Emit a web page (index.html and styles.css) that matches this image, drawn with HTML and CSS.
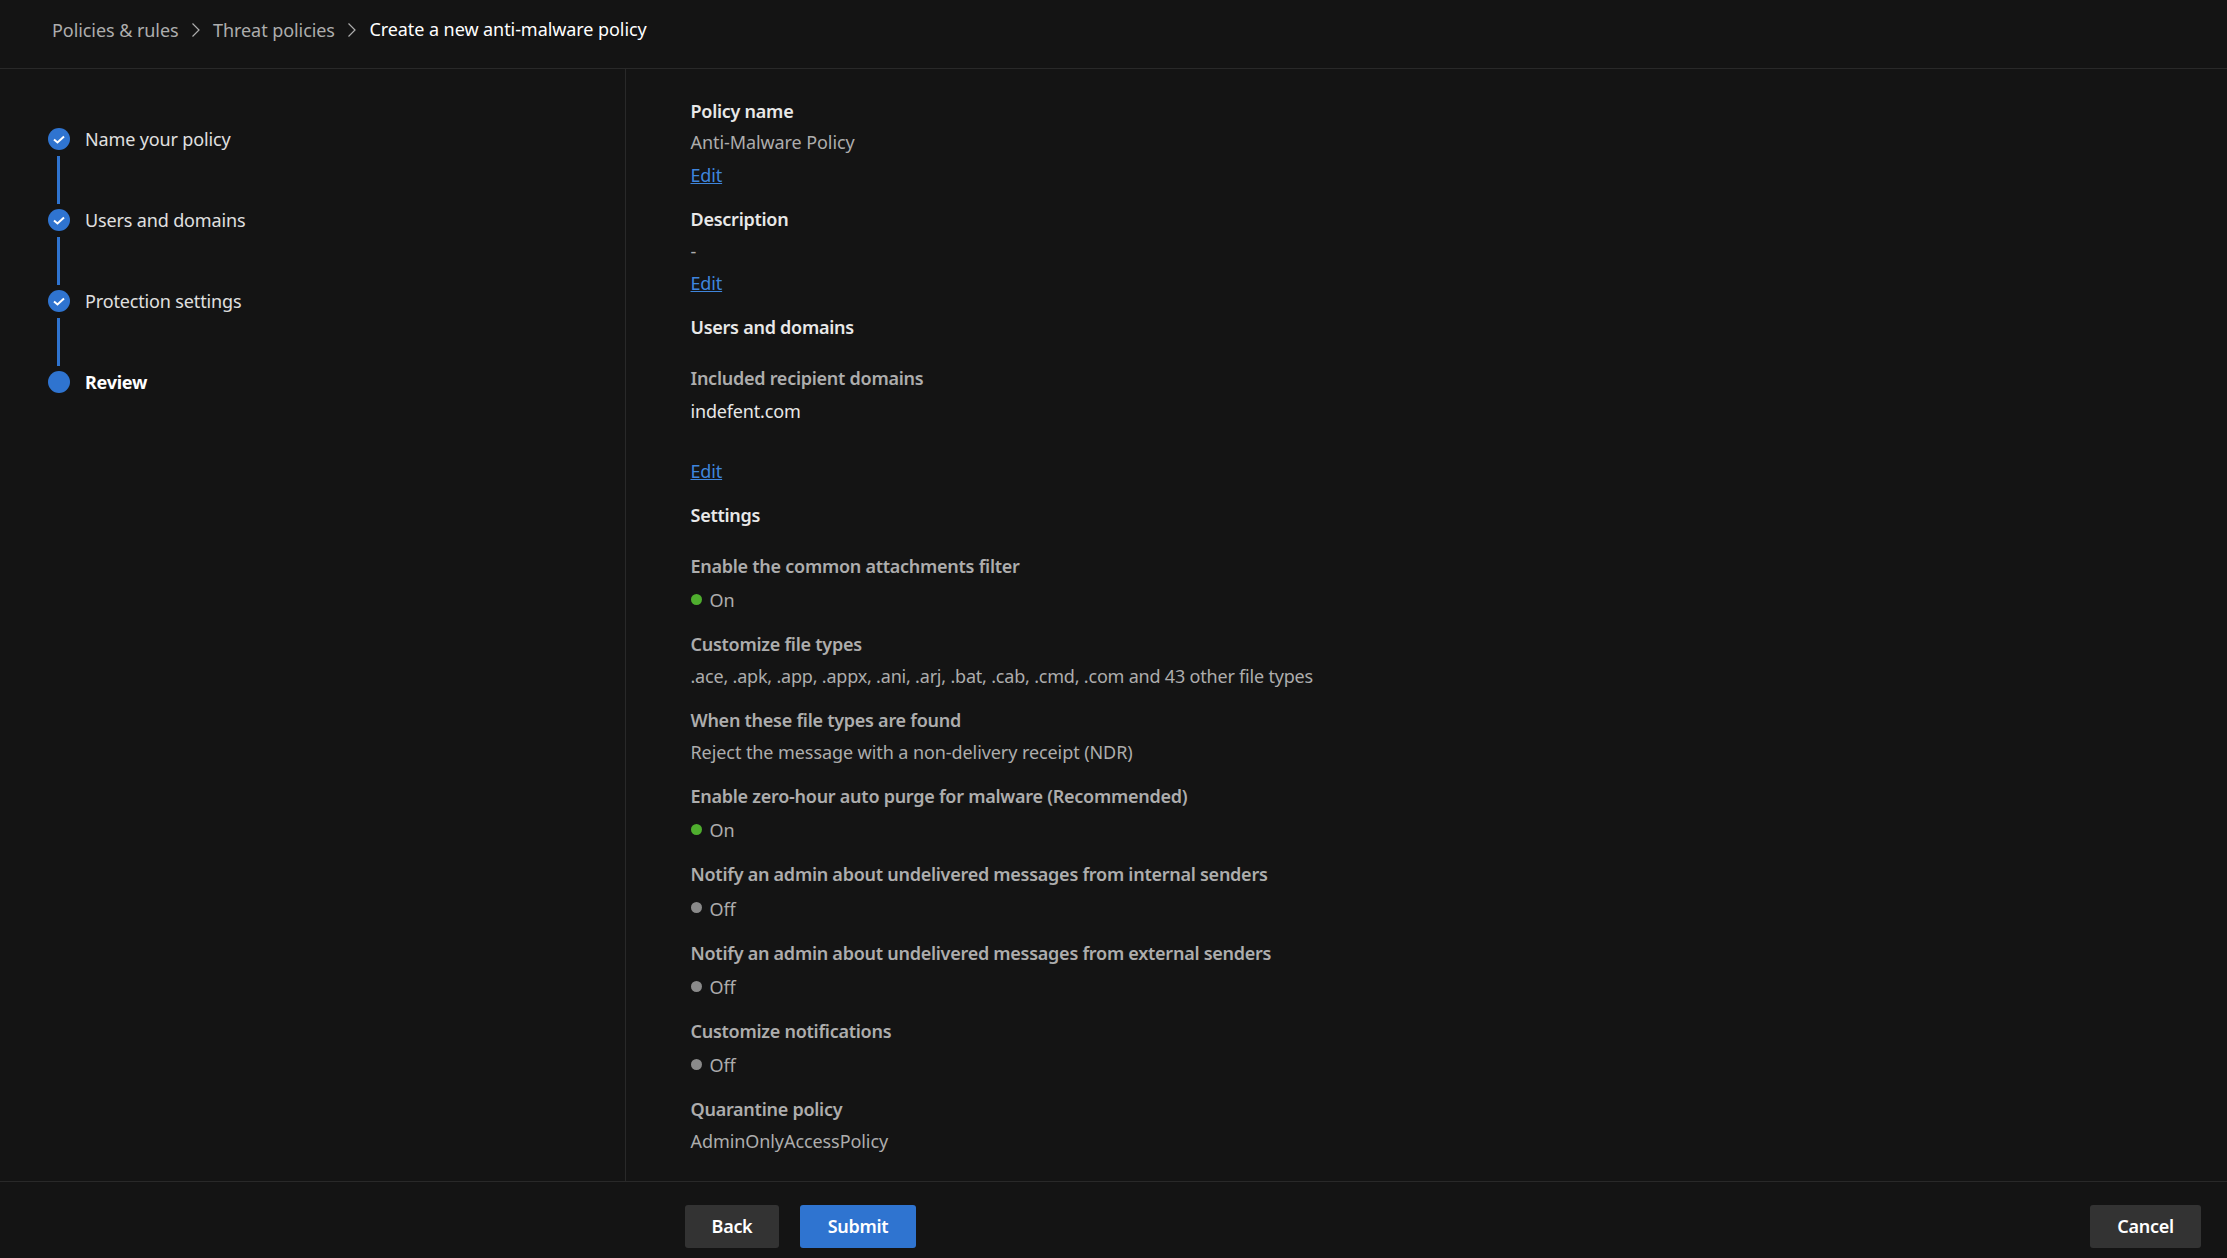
FILE: index.html
```html
<!DOCTYPE html>
<html lang="en">
<head>
<meta charset="utf-8">
<title>Create a new anti-malware policy</title>
<link rel="stylesheet" href="styles.css">
</head>
<body>
<header class="topbar">
  <nav class="crumbs">
    <span class="crumb">Policies &amp; rules</span>
    <svg class="chev" viewBox="0 0 10 16"><path d="M1.500 1.500 8 8l-6.500 6.500"/></svg>
    <span class="crumb">Threat policies</span>
    <svg class="chev" viewBox="0 0 10 16"><path d="M1.500 1.500 8 8l-6.500 6.500"/></svg>
    <span class="crumb current">Create a new anti-malware policy</span>
  </nav>
</header>
<main class="main">
  <aside class="steps">
    <div class="step"><span class="dot"><svg viewBox="0 0 22 22"><path d="M6 11.500l3.500 3 6.500-6"/></svg></span><span class="step-name">Name your policy</span></div>
    <div class="rail"></div>
    <div class="step"><span class="dot"><svg viewBox="0 0 22 22"><path d="M6 11.500l3.500 3 6.500-6"/></svg></span><span class="step-name">Users and domains</span></div>
    <div class="rail"></div>
    <div class="step"><span class="dot"><svg viewBox="0 0 22 22"><path d="M6 11.500l3.500 3 6.500-6"/></svg></span><span class="step-name">Protection settings</span></div>
    <div class="rail"></div>
    <div class="step"><span class="dot"></span><span class="step-name active">Review</span></div>
  </aside>
  <section class="review">
    <h2 class="head first">Policy name</h2>
    <p class="value tight">Anti-Malware Policy</p>
    <a class="edit near">Edit</a>
    <h2 class="head">Description</h2>
    <p class="value">-</p>
    <a class="edit">Edit</a>
    <h2 class="head">Users and domains</h2>
    <h3 class="label sub">Included recipient domains</h3>
    <p class="value strong">indefent.com</p>
    <a class="edit far">Edit</a>
    <h2 class="head">Settings</h2>
    <h3 class="label sub">Enable the common attachments filter</h3>
    <p class="status"><i class="led on"></i>On</p>
    <h3 class="label">Customize file types</h3>
    <p class="value list">.ace, .apk, .app, .appx, .ani, .arj, .bat, .cab, .cmd, .com and 43 other file types</p>
    <h3 class="label">When these file types are found</h3>
    <p class="value">Reject the message with a non-delivery receipt (NDR)</p>
    <h3 class="label">Enable zero-hour auto purge for malware (Recommended)</h3>
    <p class="status"><i class="led on"></i>On</p>
    <h3 class="label">Notify an admin about undelivered messages from internal senders</h3>
    <p class="status"><i class="led"></i>Off</p>
    <h3 class="label">Notify an admin about undelivered messages from external senders</h3>
    <p class="status"><i class="led"></i>Off</p>
    <h3 class="label">Customize notifications</h3>
    <p class="status"><i class="led"></i>Off</p>
    <h3 class="label">Quarantine policy</h3>
    <p class="value">AdminOnlyAccessPolicy</p>
  </section>
</main>
<footer class="footer">
  <button class="btn back">Back</button>
  <button class="btn primary">Submit</button>
  <button class="btn cancel">Cancel</button>
</footer>
</body>
</html>
```
FILE: styles.css
```css
* { box-sizing: border-box; }
html, body { height: 100%; }
body {
  margin: 0;
  height: 100vh;
  display: flex;
  flex-direction: column;
  background: #141414;
  color: #d6d6d6;
  font-family: "Noto Sans", "Open Sans", sans-serif;
  font-size: 18px;
  letter-spacing: -0.15px;
  line-height: 30px;
}
.topbar {
  height: 69px;
  flex: none;
  border-bottom: 1px solid #292929;
  padding: 15px 0 0 52px;
}
.crumbs { display: flex; align-items: center; letter-spacing: -0.07px; }
.crumb { color: #adadad; }
.crumb.current { color: #fff; position: relative; top: -1px; }
.chev { width: 10px; height: 16px; margin: 0 12px 0 12.500px; }
.chev path { fill: none; stroke: #adadad; stroke-width: 1.2; }
.main { flex: 1; display: flex; min-height: 0; }
.steps {
  width: 626px;
  flex: none;
  border-right: 1px solid #292929;
  padding: 55px 0 0 48px;
}
.step { display: flex; align-items: center; height: 30px; }
.dot {
  width: 22px;
  height: 22px;
  border-radius: 50%;
  background: #2f74d0;
  margin-right: 15px;
  flex: none;
}
.dot svg { display: block; width: 22px; height: 22px; }
.dot path { fill: none; stroke: #fff; stroke-width: 2; }
.step-name { color: #e0e0e0; }
.step-name.active { color: #fff; font-weight: 700; letter-spacing: -0.25px; }
.rail { width: 3px; height: 48px; margin: 2px 0 1px 9px; background: #2f74d0; }
.review { flex: 1; padding: 27px 0 0 64.500px; min-width: 0; }
.head, .label, .value, .status { margin: 0; font-size: inherit; }
.head { margin-top: 14.2px; font-weight: 600; color: #e8e8e8; letter-spacing: -0.26px; }
.head.first { margin-top: 0; }
.label { margin-top: 13.9px; font-weight: 600; color: #adadad; letter-spacing: -0.26px; }
.label.sub { margin-top: 21px; }
.value { margin-top: 2px; color: #adadad; letter-spacing: -0.08px; }
.value.list { letter-spacing: -0.2px; }
.value.tight { margin-top: 1px; }
.value.strong { margin-top: 3.500px; color: #e8e8e8; letter-spacing: -0.17px; }
.edit { display: block; width: max-content; margin-top: 1.500px; color: #3f85dc; text-decoration: underline; }
.edit.near { margin-top: 3px; }
.edit.far { margin: 30px 0 -1px; }
.status { margin-top: 4.500px; color: #adadad; display: flex; align-items: center; }
.led { width: 11px; height: 11px; border-radius: 50%; background: #8a8a8a; margin-right: 8px; position: relative; top: -1px; }
.led.on { background: #4fae2e; }
.footer {
  height: 77px;
  flex: none;
  border-top: 1px solid #292929;
  display: flex;
  align-items: flex-start;
  padding: 23px 26px 0 685px;
  gap: 21px;
}
.btn {
  height: 43px;
  border: 0;
  border-radius: 3px;
  background: #333;
  color: #fff;
  font: 600 18px "Noto Sans", sans-serif;
  letter-spacing: -0.3px;
  padding: 0 0 1px;
}
.back { width: 94px; }
.primary { width: 116px; background: #2f74d0; }
.cancel { width: 111px; margin-left: auto; }
```
